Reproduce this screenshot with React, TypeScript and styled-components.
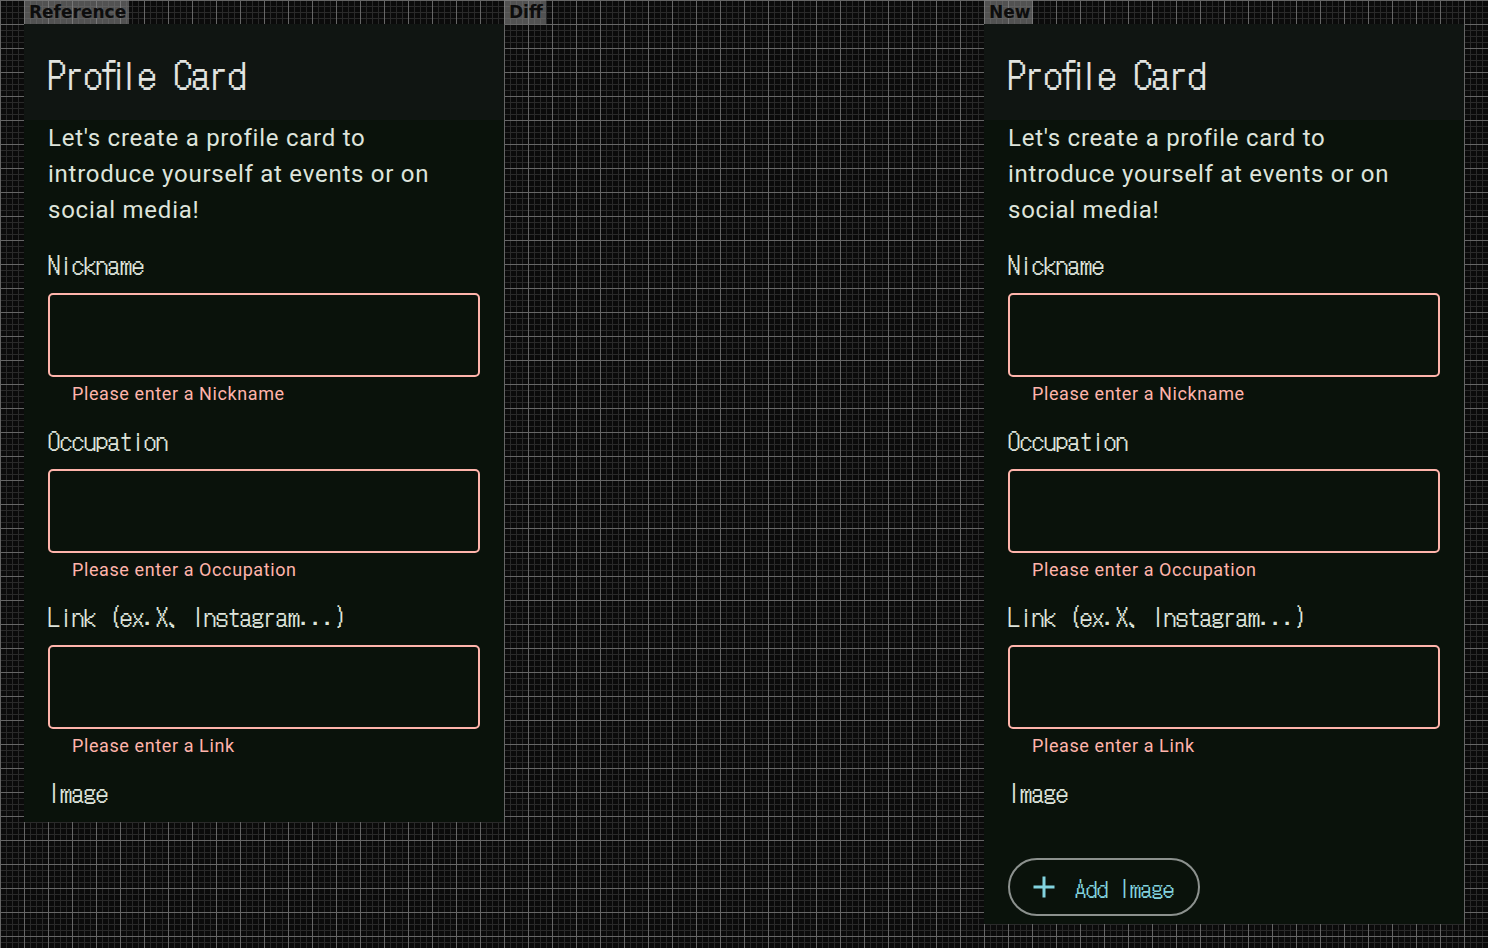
import React from "react";
import styled, { createGlobalStyle } from "styled-components";

const Global = createGlobalStyle`
  html, body { margin: 0; padding: 0; }
  body {
    background-color: #0b0b0b;
    background-image:
      linear-gradient(to right, #666 1px, transparent 1px),
      linear-gradient(to bottom, #666 1px, transparent 1px),
      linear-gradient(to right, #2a2a2a 1px, transparent 1px),
      linear-gradient(to bottom, #2a2a2a 1px, transparent 1px);
    background-size: 24px 24px, 24px 24px, 6px 6px, 6px 6px;
    min-height: 948px;
  }
`;

const PIXEL = `"DotGothic16", "IPAGothic", monospace`;
const ROBOTO = `Roboto, "Noto Sans", sans-serif`;
const ON_SURFACE = "#dee4db";
const ERROR = "#ffb4ab";
const PRIMARY = "#82d3df";

const Stage = styled.div`
  display: flex;
  padding-left: 24px;
`;

const Column = styled.div`
  width: 480px;
  display: flex;
  flex-direction: column;
  align-items: flex-start;
`;

const Tag = styled.div`
  height: 24px;
  padding: 0 3px 0 5px;
  background: rgba(130, 130, 130, 0.6);
  color: #0d0d0d;
  font: bold 17px/24px "DejaVu Sans", sans-serif;
`;

const Panel = styled.div<{ $height?: number }>`
  width: 480px;
  box-sizing: border-box;
  background: #0a120b;
  display: flex;
  flex-direction: column;
  overflow: hidden;
  height: ${(p) => (p.$height ? `${p.$height}px` : "auto")};
  padding-bottom: ${(p) => (p.$height ? "0" : "8px")};
`;

const Header = styled.header`
  height: 96px;
  flex-shrink: 0;
  box-sizing: border-box;
  background: #101512;
  display: flex;
  align-items: center;
  padding: 2px 24px 0;
`;

const Title = styled.h1`
  margin: 0;
  font-family: ${PIXEL};
  font-weight: normal;
  font-size: 36px;
  line-height: 44px;
  color: #e2e4e0;
`;

const Body = styled.div`
  display: flex;
  flex-direction: column;
  align-items: flex-start;
  padding: 0 24px;
`;

const Description = styled.p`
  margin: 0;
  width: 420px;
  font-family: ${ROBOTO};
  font-size: 24px;
  line-height: 36px;
  letter-spacing: 0.75px;
  color: ${ON_SURFACE};
`;

const Field = styled.div<{ $first?: boolean }>`
  display: flex;
  flex-direction: column;
  align-self: stretch;
  margin-top: ${(p) => (p.$first ? "18px" : "16px")};
`;

const Label = styled.label`
  font-family: ${PIXEL};
  font-size: 24px;
  line-height: 36px;
  color: ${ON_SURFACE};
`;

const InputBox = styled.input`
  margin-top: 11px;
  height: 84px;
  box-sizing: border-box;
  border: 2px solid ${ERROR};
  border-radius: 5px;
  background: transparent;
  outline: none;
  padding: 0 24px;
  font: 24px ${ROBOTO};
  color: ${ON_SURFACE};
`;

const ErrorText = styled.div`
  margin-top: 5px;
  padding-left: 24px;
  font-family: ${ROBOTO};
  font-size: 18px;
  line-height: 24px;
  letter-spacing: 0.6px;
  color: ${ERROR};
`;

const AddButton = styled.button`
  margin-top: 48px;
  height: 58px;
  box-sizing: border-box;
  display: inline-flex;
  align-items: center;
  gap: 20px;
  padding: 0 24px 0 23px;
  border: 2px solid #8c918e;
  border-radius: 29px;
  background: transparent;
  color: ${PRIMARY};
  font-family: ${PIXEL};
  font-size: 22px;
  line-height: 24px;
  cursor: pointer;
`;

const PlusIcon = () => (
  <svg width="22" height="22" viewBox="0 0 22 22" aria-hidden="true">
    <path d="M11 0.5V21.5M0.5 11H21.5" stroke={PRIMARY} strokeWidth="3" fill="none" />
  </svg>
);

const fields = [
  { label: "Nickname", error: "Please enter a Nickname" },
  { label: "Occupation", error: "Please enter a Occupation" },
  { label: "Link (ex.X、Instagram...)", error: "Please enter a Link" },
];

function ProfileForm({ height, withButton }: { height?: number; withButton?: boolean }) {
  return (
    <Panel $height={height}>
      <Header>
        <Title>Profile Card</Title>
      </Header>
      <Body>
        <Description>
          Let's create a profile card to introduce yourself at events or on social media!
        </Description>
        {fields.map((f, i) => (
          <Field key={f.label} $first={i === 0}>
            <Label>{f.label}</Label>
            <InputBox type="text" aria-label={f.label} />
            <ErrorText>{f.error}</ErrorText>
          </Field>
        ))}
        <Field>
          <Label>Image</Label>
        </Field>
        {withButton && (
          <AddButton type="button">
            <PlusIcon />
            <span>Add Image</span>
          </AddButton>
        )}
      </Body>
    </Panel>
  );
}

export default function App() {
  return (
    <>
      <Global />
      <Stage>
        <Column>
          <Tag>Reference</Tag>
          <ProfileForm height={798} />
        </Column>
        <Column>
          <Tag>Diff</Tag>
        </Column>
        <Column>
          <Tag>New</Tag>
          <ProfileForm withButton />
        </Column>
      </Stage>
    </>
  );
}
